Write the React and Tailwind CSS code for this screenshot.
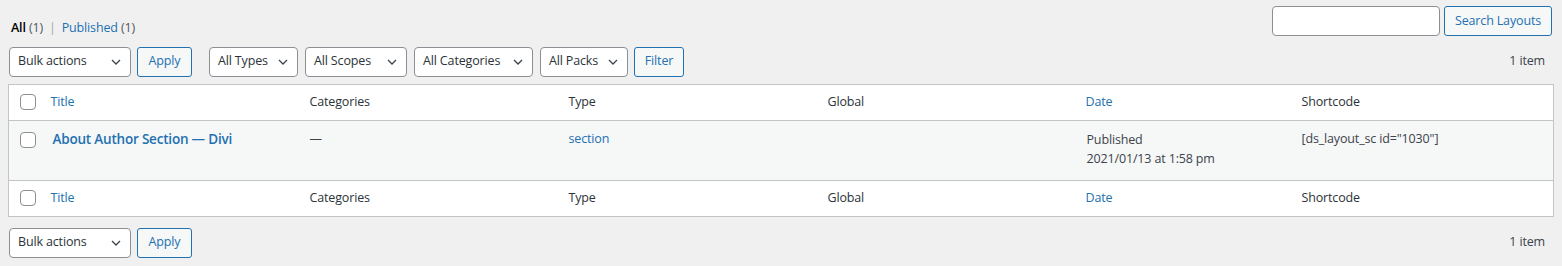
import React from "react";

const font = { fontFamily: '"Open Sans", "Noto Sans", sans-serif' };

const Chevron = () => (
	<svg width="16" height="16" viewBox="0 0 20 20" className="shrink-0">
		<path d="M5 7.5l5 5 5-5" fill="none" stroke="#3c434a" strokeWidth="1.6" />
	</svg>
);

const Select = ({ label, width }) => (
	<div
		className={`flex items-center justify-between shrink-0 h-[30px] pl-2 pr-[6px] bg-white border border-[#8c8f94] rounded-[4px] text-[12.5px] tracking-[-0.15px] text-[#2c3338] ${width}`}
	>
		<span className="whitespace-nowrap">{label}</span>
		<Chevron />
	</div>
);

const Button = ({ label, width }) => (
	<div
		className={`flex items-center justify-center shrink-0 h-[30px] border border-[#2271b1] bg-[#f6f7f7] text-[#2271b1] rounded-[3px] text-[12.5px] tracking-[-0.15px] ${width}`}
	>
		{label}
	</div>
);

const Check = () => (
	<div className="w-4 h-4 border border-[#8c8f94] rounded-[4px] bg-white" />
);

const HeadRow = () => (
	<tr className="h-[36px] text-[12.5px] tracking-[-0.15px] text-[#2c3338]">
		<td className="pl-[11px]">
			<Check />
		</td>
		<td className="pl-[10px] text-[#2271b1]">Title</td>
		<td className="pl-[10px]">Categories</td>
		<td className="pl-[10px]">Type</td>
		<td className="pl-[10px]">Global</td>
		<td className="pl-[10px] text-[#2271b1]">Date</td>
		<td className="pl-[10px]">Shortcode</td>
	</tr>
);

export default function App() {
	return (
		<div className="w-[1562px] h-[266px] bg-[#f0f0f1] px-2 pt-[6px] text-[#3c434a]" style={font}>
			<div className="flex justify-between">
				<div className="pt-[13px] pl-[3px] text-[12.5px] tracking-[-0.15px]">
					<span className="text-black font-semibold">All</span>{" "}
					<span className="text-[#50575e]">(1)</span>
					<span className="text-[#a7aaad] px-[6px]">|</span>
					<span className="text-[#2271b1]">Published</span>{" "}
					<span className="text-[#50575e]">(1)</span>
				</div>
				<div className="flex gap-[4px] pr-[2px]">
					<div className="w-[168px] h-[30px] bg-white border border-[#8c8f94] rounded-[4px]" />
					<Button label="Search Layouts" width="w-[108px]" />
				</div>
			</div>
			<div className="flex items-center mt-[9px] pl-[1px]">
				<Select label="Bulk actions" width="w-[122px]" />
				<div className="ml-[6px]">
					<Button label="Apply" width="w-[55px]" />
				</div>
				<div className="flex gap-[7px] ml-[17px]">
					<Select label="All Types" width="w-[89px]" />
					<Select label="All Scopes" width="w-[102px]" />
					<Select label="All Categories" width="w-[119px]" />
					<Select label="All Packs" width="w-[88px]" />
				</div>
				<div className="ml-[6px]">
					<Button label="Filter" width="w-[50px]" />
				</div>
				<div className="ml-auto pr-[9px] text-[12.5px] tracking-[-0.15px] text-[#3c434a]">1 item</div>
			</div>
			<table className="mt-[7px] w-[1546px] table-fixed border-collapse border border-[#c3c4c7] bg-white">
				<colgroup>
					<col className="w-[32px]" />
					<col className="w-[259px]" />
					<col className="w-[259px]" />
					<col className="w-[259px]" />
					<col className="w-[258px]" />
					<col className="w-[216px]" />
					<col />
				</colgroup>
				<thead className="border-b border-[#c3c4c7]">
					<HeadRow />
				</thead>
				<tbody>
					<tr className="h-[60px] bg-[#f6f7f7] align-top text-[12.5px] tracking-[-0.15px]">
						<td className="pl-[11px] pt-[11px]">
							<Check />
						</td>
						<td className="pl-[12px] pt-[8px] text-[13.5px] tracking-[-0.2px] font-semibold text-[#2271b1] whitespace-nowrap">
							About Author Section — Divi
						</td>
						<td className="pl-[10px] pt-[9px]">—</td>
						<td className="pl-[10px] pt-[9px] text-[#2271b1]">section</td>
						<td />
						<td className="pl-[11px] pt-[9px] leading-[19px]">
							Published
							<br />
							2021/01/13 at 1:58 pm
						</td>
						<td className="pl-[10px] pt-[9px]">[ds_layout_sc id="1030"]</td>
					</tr>
				</tbody>
				<tfoot className="border-t border-[#c3c4c7]">
					<HeadRow />
				</tfoot>
			</table>
			<div className="flex items-center mt-[11px] pl-[1px]">
				<Select label="Bulk actions" width="w-[122px]" />
				<div className="ml-[6px]">
					<Button label="Apply" width="w-[55px]" />
				</div>
				<div className="ml-auto pr-[9px] text-[12.5px] tracking-[-0.15px]">1 item</div>
			</div>
		</div>
	);
}
